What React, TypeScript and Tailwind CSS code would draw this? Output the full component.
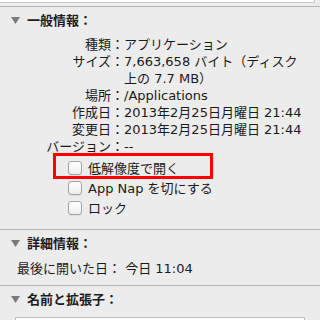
import React from 'react';

const font = { fontFamily: '"DejaVu Sans", "Noto Sans CJK JP", sans-serif' };

function Triangle() {
  return (
    <svg width="9" height="7" viewBox="0 0 9 7" className="shrink-0">
      <path d="M0 0 H9 L4.5 7 Z" fill="#7b7b7b" />
    </svg>
  );
}

function SectionHeader({ title }: { title: string }) {
  return (
    <div className="flex items-center h-[17px] pl-[11px] gap-[7px]">
      <Triangle />
      <span className="font-bold text-[#1c1c1c]">{title}</span>
    </div>
  );
}

function Checkbox() {
  return (
    <span className="w-[14px] h-[14px] shrink-0 rounded-[3px] border border-[#a3a3a3] bg-gradient-to-b from-white to-[#ededed] shadow-[0_1px_0_rgba(0,0,0,0.05)]" />
  );
}

const rows: [string, React.ReactNode][] = [
  ['種類：', 'アプリケーション'],
  [
    'サイズ：',
    <>
      7,663,658 バイト（ディスク
      <br />
      上の 7.7 MB）
    </>,
  ],
  ['場所：', '/Applications'],
  ['作成日：', '2013年2月25日月曜日 21:44'],
  ['変更日：', '2013年2月25日月曜日 21:44'],
  ['バージョン：', '--'],
];

export default function App() {
  return (
    <div
      className="w-[320px] h-[320px] overflow-hidden bg-[#ececec] text-[13px] leading-[17px] text-[#1a1a1a]"
      style={font}
    >
      {/* bottom of the previous field */}
      <div className="h-[3px] w-[315px] bg-white border-r border-b border-[#c9c9c9]" />
      <div className="mt-[3px] h-px bg-[#b4b4b4]" />

      <div className="mt-[5px]">
        <SectionHeader title="一般情報：" />
      </div>

      <div className="mt-[7px] grid grid-cols-[124px_1fr]">
        {rows.map(([label, value], i) => (
          <React.Fragment key={i}>
            <div className="text-right whitespace-nowrap">{label}</div>
            <div className="whitespace-nowrap">{value}</div>
          </React.Fragment>
        ))}
      </div>

      <div className="mt-[3px] flex flex-col">
        <div className="relative flex items-center h-[20px] pl-[68px] gap-[6px]">
          <Checkbox />
          <span>低解像度で開く</span>
          <div className="absolute left-[53px] top-[-5px] w-[160px] h-[26px] border-[3px] border-[#ff0000]" />
        </div>
        <div className="flex items-center h-[20px] pl-[68px] gap-[6px]">
          <Checkbox />
          <span>App Nap を切にする</span>
        </div>
        <div className="flex items-center h-[20px] pl-[68px] gap-[6px]">
          <Checkbox />
          <span>ロック</span>
        </div>
      </div>

      <div className="mt-[11px] h-px bg-[#b4b4b4]" />
      <div className="mt-[5px]">
        <SectionHeader title="詳細情報：" />
      </div>
      <div className="mt-[8px] pl-[17px] whitespace-nowrap">最後に開いた日： 今日 11:04</div>

      <div className="mt-[8px] h-px bg-[#b4b4b4]" />
      <div className="mt-[5px]">
        <SectionHeader title="名前と拡張子：" />
      </div>
      <div className="mt-[9px] ml-[15px] w-[290px] h-[20px] bg-white border border-[#bdbdbd]" />
    </div>
  );
}
